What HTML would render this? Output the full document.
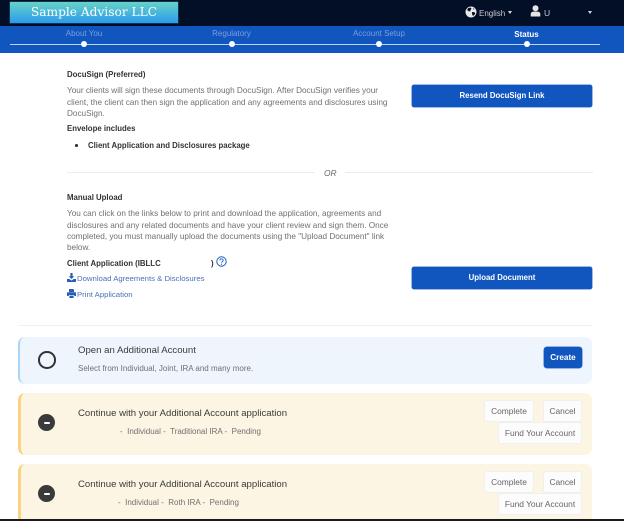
<!DOCTYPE html>
<html lang="en">
<head>
<meta charset="utf-8">
<style>
html,body{margin:0;padding:0;background:#fff}
#p{position:relative;width:624px;height:521px;overflow:hidden;background:#fff;font-family:"Liberation Sans",sans-serif;color:#707070}
#p div,#p svg{position:absolute}
.t{white-space:nowrap;font-size:8.2px;line-height:11px}
.b{font-weight:bold;color:#333;font-size:7.8px}
.s{font-size:8px}
.step{color:#7d9fdb;font-size:8px;white-space:nowrap;text-align:center;width:80px;top:29px}
.dot{width:6px;height:6px;border-radius:50%;background:#fff;top:40.5px}
.blue{background:#1155bf;border-radius:2px;color:#fff;font-weight:bold;font-size:7.8px;text-align:center;box-shadow:0 0 0 .5px #3c74cc}
.card{left:18px;width:574px;border-radius:7px;box-sizing:border-box}
.y{background:#fdf5e3;border-left:3px solid #fbd27d}
.btn{background:#fcfcfc;border:1px solid #efefec;border-radius:3px;box-sizing:border-box;color:#666;font-size:8.4px;text-align:center;white-space:nowrap}
.h{font-size:9.6px;color:#3a3a3a;white-space:nowrap;line-height:12px}
.link{color:#4a70b8;font-size:7.75px;white-space:nowrap;line-height:11px}
</style>
</head>
<body>
<div id="p">
  <div style="left:0;top:0;width:624px;height:26px;background:#020f26"></div>
  <div style="left:10px;top:2px;width:168px;height:21px;background:linear-gradient(#67d3c5,#2b9bee);box-shadow:0 0 0 .5px #1d5a80"></div>
  <div style="left:10px;top:2px;width:168px;height:21px;text-align:center;color:#fff;font:12.2px/20px 'DejaVu Serif','Liberation Serif',serif;white-space:nowrap">Sample Advisor LLC</div>

  <svg style="left:465px;top:6px" width="12" height="12" viewBox="0 0 12 12"><circle cx="6" cy="6" r="5.5" fill="#e8e8e8"/><path d="M3 2.2l2.500-.7 1 1.300-1 1.200-.3 1.400-1.500-.2-1.600-1.300zM7 6l2.500.3.8 1.200-1.700 2.200-1.200-.4-.4-1.800zM8 2l1.500 1-.8.8z" fill="#020f26"/></svg>
  <div style="left:479px;top:7.500px;color:#c9ccd2;font-size:8px;line-height:11px;white-space:nowrap">English</div>
  <div style="left:508px;top:10.500px;width:0;height:0;border:2.500px solid transparent;border-top:3px solid #d8d8d8;border-bottom:0"></div>
  <svg style="left:530px;top:5px" width="11" height="12" viewBox="0 0 11 12"><circle cx="5.500" cy="3.200" r="3" fill="#e5e5e5"/><path d="M.7 11.500V9.200C.7 7.500 2 6.600 3.400 6.600h4.200c1.400 0 2.700.9 2.700 2.600v2.300z" fill="#e5e5e5"/></svg>
  <div style="left:544px;top:7.500px;color:#c9ccd2;font-size:8.500px;line-height:11px">U</div>
  <div style="left:588px;top:10.500px;width:0;height:0;border:2.500px solid transparent;border-top:3px solid #d8d8d8;border-bottom:0"></div>

  <div style="left:0;top:26px;width:624px;height:27px;background:#1155bf"></div>
  <div style="left:10px;top:43.500px;width:590px;height:1px;background:#c3d3ee"></div>
  <div class="step" style="left:44px">About You</div>
  <div class="step" style="left:191.500px">Regulatory</div>
  <div class="step" style="left:339px">Account Setup</div>
  <div class="step" style="left:486.500px;color:#fff;font-weight:bold;top:29.500px">Status</div>
  <div class="dot" style="left:81px"></div>
  <div class="dot" style="left:229px"></div>
  <div class="dot" style="left:376px"></div>
  <div class="dot" style="left:524px"></div>

  <div class="t b" style="left:67px;top:69px">DocuSign (Preferred)</div>
  <div class="t" style="left:67px;top:85px">Your clients will sign these documents through DocuSign. After DocuSign verifies your</div>
  <div class="t" style="left:67px;top:96.500px">client, the client can then sign the application and any agreements and disclosures using</div>
  <div class="t" style="left:67px;top:108px">DocuSign.</div>
  <div class="t b" style="left:67px;top:123px">Envelope includes</div>
  <div style="left:75px;top:144px;width:2.500px;height:2.500px;border-radius:50%;background:#333"></div>
  <div class="t b" style="left:88px;top:140px">Client Application and Disclosures package</div>

  <div style="left:67px;top:172px;width:248px;height:1px;background:#ececec"></div>
  <div style="left:324px;top:167.500px;color:#666;font-size:8.400px;font-style:italic;line-height:11px">OR</div>
  <div style="left:345px;top:172px;width:248px;height:1px;background:#ececec"></div>

  <div class="blue" style="left:412px;top:85px;width:180px;height:22px;line-height:22px">Resend DocuSign Link</div>
  <div class="blue" style="left:412px;top:267px;width:180px;height:22px;line-height:22px">Upload Document</div>

  <div class="t b" style="left:67px;top:192px">Manual Upload</div>
  <div class="t" style="left:67px;top:208px">You can click on the links below to print and download the application, agreements and</div>
  <div class="t" style="left:67px;top:219.500px">disclosures and any related documents and have your client review and sign them. Once</div>
  <div class="t" style="left:67px;top:231px">completed, you must manually upload the documents using the "Upload Document" link</div>
  <div class="t" style="left:67px;top:242px">below.</div>
  <div class="t b" style="left:67px;top:257.500px">Client Application (IBLLC</div>
  <div class="t b" style="left:211px;top:257.500px">)</div>
  <svg style="left:216px;top:256px" width="11" height="11" viewBox="0 0 11 11"><circle cx="5.500" cy="5.500" r="4.700" fill="none" stroke="#1c5cc0" stroke-width="1"/><path d="M3.900 4.400c0-2.100 3.300-2.100 3.300-.1 0 1.300-1.600 1.300-1.600 2.500" fill="none" stroke="#1c5cc0" stroke-width=".9"/><circle cx="5.500" cy="8.200" r=".6" fill="#1c5cc0"/></svg>
  <svg style="left:67px;top:273px" width="9" height="9" viewBox="0 0 9 9"><path d="M3.400 0h2.200v3.200h1.700L4.500 6 1.700 3.200h1.700zM0 6h2.300l2.200 1.500L6.700 6H9v3H0z" fill="#2a5db5"/></svg>
  <div class="link" style="left:77px;top:272.500px">Download Agreements &amp; Disclosures</div>
  <svg style="left:67px;top:289px" width="9" height="9" viewBox="0 0 9 9"><path d="M2 0h4.300L7 .8V3H2zM.8 3.300h7.400c.5 0 .8.300.8.800V7H7.200V6H1.800v1H0V4.100c0-.5.300-.8.800-.8zM2.400 6.600h4.200V9H2.400z" fill="#2a5db5"/></svg>
  <div class="link" style="left:77px;top:288.500px">Print Application</div>

  <div style="left:18px;top:325px;width:574px;height:1px;background:#f0f0f0"></div>

  <div class="card" style="top:337px;height:47px;background:#eef5fd;border-left:2px solid #a8d4f7"></div>
  <div style="left:38px;top:351px;width:13.500px;height:13.500px;border:2px solid #333;border-radius:50%"></div>
  <div class="h" style="left:78px;top:344.500px">Open an Additional Account</div>
  <div class="t s" style="left:78px;top:362.500px">Select from Individual, Joint, IRA and many more.</div>
  <div class="blue" style="left:544px;top:347px;width:38px;height:21px;line-height:21px;border-radius:3px;font-size:8.200px">Create</div>

  <div class="card y" style="top:393px;height:62px"></div>
  <div style="left:38px;top:414px;width:17px;height:17px;border-radius:50%;background:#3a3a3a"></div>
  <div style="left:43.500px;top:421.500px;width:6px;height:2px;background:#fff;border-radius:1px"></div>
  <div class="h" style="left:78px;top:407.500px">Continue with your Additional Account application</div>
  <div class="t s" style="left:120px;top:425.500px">-&nbsp; Individual -&nbsp; Traditional IRA -&nbsp; Pending</div>
  <div class="btn" style="left:484px;top:400px;width:50px;height:22px;line-height:20px">Complete</div>
  <div class="btn" style="left:543px;top:400px;width:39px;height:22px;line-height:20px">Cancel</div>
  <div class="btn" style="left:498px;top:422px;width:84px;height:22px;line-height:20px">Fund Your Account</div>

  <div class="card y" style="top:464px;height:62px"></div>
  <div style="left:38px;top:485px;width:17px;height:17px;border-radius:50%;background:#3a3a3a"></div>
  <div style="left:43.500px;top:492.500px;width:6px;height:2px;background:#fff;border-radius:1px"></div>
  <div class="h" style="left:78px;top:478.500px">Continue with your Additional Account application</div>
  <div class="t s" style="left:118px;top:496.500px">-&nbsp; Individual -&nbsp; Roth IRA -&nbsp; Pending</div>
  <div class="btn" style="left:484px;top:471px;width:50px;height:22px;line-height:20px">Complete</div>
  <div class="btn" style="left:543px;top:471px;width:39px;height:22px;line-height:20px">Cancel</div>
  <div class="btn" style="left:498px;top:493px;width:84px;height:22px;line-height:20px">Fund Your Account</div>

  <div style="left:0;top:519px;width:624px;height:2px;background:#1a1a1a"></div>
</div>
</body>
</html>
